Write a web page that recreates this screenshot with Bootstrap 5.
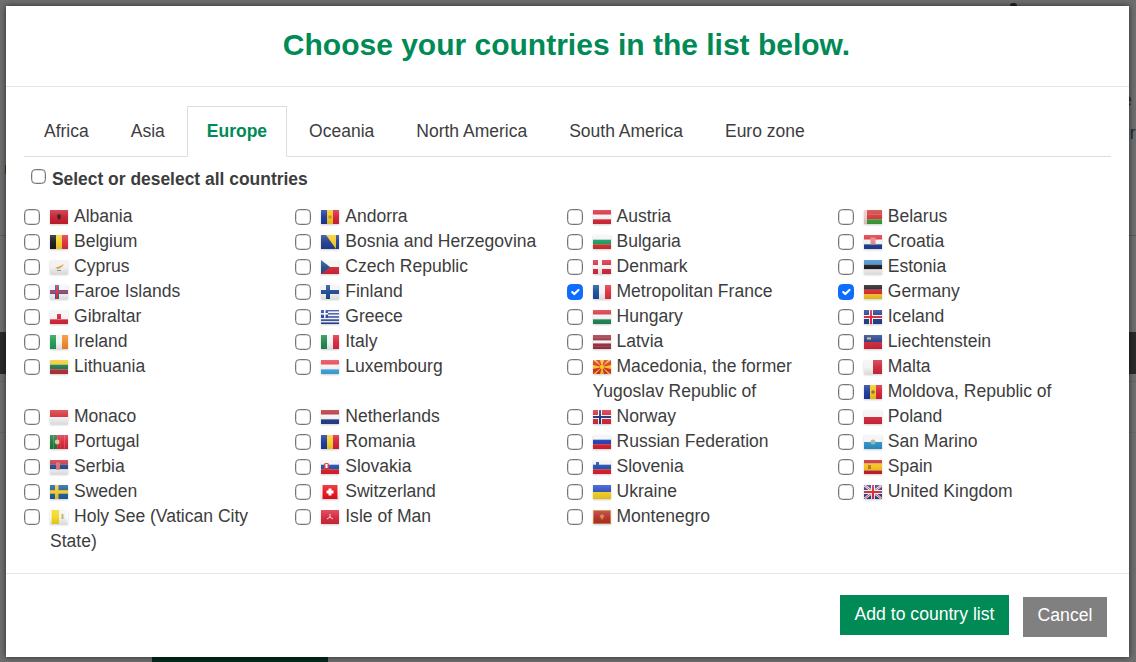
<!DOCTYPE html>
<html lang="en">
<head>
  <meta charset="UTF-8">
  <title>Choose your countries</title>
  <link href="https://cdn.jsdelivr.net/npm/bootstrap@5.3.0/dist/css/bootstrap.min.css" rel="stylesheet">
  <style>
    html, body { height: 100%; overflow: hidden; }
    body { background: #6e6e6e; font-family: "Liberation Sans", Arial, sans-serif; color: #3d3d3d; font-size: 17.55px; }
    /* dimmed page behind the dialog */
    .page-band { position: absolute; left: 0; right: 0; top: 332px; height: 42px; background: #2a2a2a; }
    .page-line { position: absolute; left: 0; right: 0; height: 1px; background: #5a5a5a; }
    .line-a { top: 235px; }
    .line-b { top: 381px; background: #636363; }
    .line-c { top: 432px; background: #666; }
    .page-btn { position: absolute; left: 152px; width: 176px; top: 657px; height: 5px; background: #042b1c; }
    .page-word { position: absolute; color: #1c2a33; font-size: 17.6px; line-height: 20px; }
    .word-a { left: 1122px; top: 90px; }
    .word-b { left: 1120px; top: 123px; }
    .page-mark { position: absolute; left: 1010px; top: 3px; width: 7px; height: 4px; background: #222; border-radius: 3px 3px 0 0; }
    .page-tick { position: absolute; left: 5px; top: 165px; width: 2px; height: 9px; background: #4a3a14; }
    .country-dialog { position: absolute; left: 6px; top: 6px; width: 1123px; height: 651px; background: #fff; box-shadow: 0 0 6px rgba(0,0,0,.6); display: flex; flex-direction: column; }
    .dialog-head { height: 81px; border-bottom: 1px solid #e5e5e5; padding: 0 2px 2px 0; }
    .dialog-head h4 { color: #008a55; font-size: 30px; font-weight: 700; margin: 0; }
    .dialog-main { flex: 1; padding: 19px 18px 0; }
    .dialog-main .nav-tabs { border-bottom: 1px solid #ddd; height: 51px; }
    .dialog-main .nav-link { color: #3d3d3d; font-size: 17.5px; border-radius: 0; padding: 12px 19px 0; margin-right: 2px; height: 51px; line-height: 24px; border: 1px solid transparent; background: transparent; }
    .dialog-main .nav-link.active { color: #008a55; font-weight: 700; border-color: #ddd #ddd #fff; background: #fff; }
    .all-row { padding: 10px 0 0 7px; height: 47px; }
    .all-row input { width: 15px; height: 15px; margin: 2px 1px 0 0; }
    .all-row label { font-weight: 700; font-size: 17.45px; line-height: 24px; vertical-align: top; }
    #countryList { margin-right: 2px; }
    .country-item { float: left; width: 25%; position: relative; padding: 0 18px 0 26px; line-height: 25px; }
    .country-item input { position: absolute; left: 0; top: 5px; width: 16px; height: 16px; margin: 0; }
    input[type=checkbox] { border: 1px solid #767676; border-radius: 3px; box-shadow: inset 0 0 0 .5px rgba(118,118,118,.5); }
    input[type=checkbox]:checked { background-color: #0d6efd; border-color: #0d6efd; box-shadow: none; }
    .flag-box { display: inline-block; position: relative; width: 18px; height: 14px; margin-right: 6px; vertical-align: -2px; box-shadow: 0 1px 2px rgba(0,0,0,.2); }
    .flag-box svg { display: block; width: 18px; height: 14px; filter: blur(.3px); }
    .flag-box::after { content: ""; position: absolute; inset: 0; background: linear-gradient(to bottom, rgba(255,255,255,.2), rgba(255,255,255,.03) 50%, rgba(0,0,0,.1)); }
    .dialog-foot { height: 84px; border-top: 1px solid #e5e5e5; padding: 21px 22px 0 0; gap: 14px; }
    .btn-add, .btn-add:hover { background: #008a55; color: #fff; border: 0; border-radius: 0; width: 169px; height: 40px; padding: 0 0 1px; font-size: 17.6px; }
    .btn-quit, .btn-quit:hover { background: #808080; color: #fff; border: 0; border-radius: 0; width: 84px; height: 40px; padding: 0 0 3px; font-size: 17.6px; margin-top: 2px; }
  </style>
</head>
<body>
  <div class="page-line line-a"></div>
  <div class="page-band"></div>
  <div class="page-line line-b"></div>
  <div class="page-line line-c"></div>
  <div class="page-btn"></div>
  <div class="page-mark"></div>
  <div class="page-tick"></div>
  <div class="page-word word-a">e</div>
  <div class="page-word word-b">er</div>

  <div class="country-dialog">
    <div class="dialog-head d-flex align-items-center justify-content-center">
      <h4>Choose your countries in the list below.</h4>
    </div>
    <div class="dialog-main">
      <ul class="nav nav-tabs">
        <li class="nav-item"><a class="nav-link" href="#">Africa</a></li>
        <li class="nav-item"><a class="nav-link" href="#">Asia</a></li>
        <li class="nav-item"><a class="nav-link active" href="#">Europe</a></li>
        <li class="nav-item"><a class="nav-link" href="#">Oceania</a></li>
        <li class="nav-item"><a class="nav-link" href="#">North America</a></li>
        <li class="nav-item"><a class="nav-link" href="#">South America</a></li>
        <li class="nav-item"><a class="nav-link" href="#">Euro zone</a></li>
      </ul>
      <div class="all-row">
        <input class="form-check-input" type="checkbox" id="allCountries">
        <label for="allCountries">Select or deselect all countries</label>
      </div>
      <div id="countryList" class="clearfix"></div>
    </div>
    <div class="dialog-foot d-flex justify-content-end align-items-start">
      <button class="btn btn-add" type="button">Add to country list</button>
      <button class="btn btn-quit" type="button">Cancel</button>
    </div>
  </div>

  <script>
    // stripes: h = horizontal bands, v = vertical bands, extra = svg drawn on top
    function h(c) { var s = '', n = c.length; c.forEach(function(x, i) { s += '<rect y="' + (14 * i / n) + '" width="18" height="' + (14 / n + .1) + '" fill="' + x + '"/>'; }); return s; }
    function v(c) { var s = '', n = c.length; c.forEach(function(x, i) { s += '<rect x="' + (18 * i / n) + '" width="' + (18 / n + .1) + '" height="14" fill="' + x + '"/>'; }); return s; }
    function cross(bg, c, c2) {
      return '<rect width="18" height="14" fill="' + bg + '"/><rect x="5" width="4" height="14" fill="' + c + '"/><rect y="5" width="18" height="4" fill="' + c + '"/>' +
        (c2 ? '<rect x="6" width="2" height="14" fill="' + c2 + '"/><rect y="6" width="18" height="2" fill="' + c2 + '"/>' : '');
    }
    var R = '#d9293c', W = '#f4f4f4', K = '#1c1c1c';
    var countries = [
      ['Albania', h(['#c8202f']) + '<path d="M9 4l2 1-.5 3L9 10 7.500 8 7 5z" fill="#222"/>'],
      ['Andorra', v(['#1c3a9c', '#f2c81e', '#d6213a']) + '<circle cx="9" cy="7" r="1.800" fill="#c98a2c"/>'],
      ['Austria', h([R, W, R])],
      ['Belarus', h(['#d23a3a', '#d23a3a', '#3f9e3a']) + '<rect width="3" height="14" fill="#f0c8c8"/>'],
      ['Belgium', v([K, '#f5d32a', '#e0303c'])],
      ['Bosnia and Herzegovina', h(['#24408f']) + '<path d="M5 0h10v14z" fill="#f3cb2c"/>'],
      ['Bulgaria', h([W, '#1f9a66', '#d3322c'])],
      ['Croatia', h(['#e0303c', W, '#21408f']) + '<rect x="6.500" y="2.500" width="5" height="7" fill="#e08a8a"/>'],
      ['Cyprus', h(['#f1f1f1']) + '<path d="M5 8l5-2 4-2-2 3-4 2z" fill="#e0a050"/><path d="M7 10.500h4" stroke="#8aa878"/>'],
      ['Czech Republic', h([W, '#d7283c']) + '<path d="M0 0l9 7-9 7z" fill="#22508f"/>'],
      ['Denmark', cross('#d9293c', W)],
      ['Estonia', h(['#3f8ad0', K, W])],
      ['Faroe Islands', cross(W, '#2a5fb0', '#e0303c')],
      ['Finland', cross(W, '#1f4a94')],
      ['Metropolitan France', v(['#1a4f9c', W, '#e0303c']), 1],
      ['Germany', h([K, '#d6282c', '#f5c81e']), 1],
      ['Gibraltar', h([W, W, '#d9293c']) + '<rect x="7" y="4" width="4" height="5" fill="#d9293c"/>'],
      ['Greece', h(['#25429a', W, '#25429a', W, '#25429a', W, '#25429a', W, '#25429a']) + '<rect width="7" height="7.800" fill="#25429a"/><rect x="3" width="1.500" height="7.800" fill="#fff"/><rect y="3.100" width="7" height="1.500" fill="#fff"/>'],
      ['Hungary', h(['#d7323c', W, '#1f8a56'])],
      ['Iceland', cross('#22418f', W, '#d9293c')],
      ['Ireland', v(['#1f9a56', W, '#f28a2c'])],
      ['Italy', v(['#1f8a4c', W, '#d9293c'])],
      ['Latvia', h(['#9c3040', '#9c3040', W, '#9c3040', '#9c3040'])],
      ['Liechtenstein', h(['#23418f', '#d2283c']) + '<rect x="3" y="2.500" width="4" height="2" fill="#e0c040"/>'],
      ['Lithuania', h(['#f3c92c', '#1f7a4c', '#b8323c'])],
      ['Luxembourg', h(['#e8404c', W, '#3fa8e0'])],
      ['Macedonia, the former Yugoslav Republic of', h(['#d9302c']) + '<path d="M0 0h3l6 7 6-7h3L9 7l9 7h-3L9 7l-6 7H0l9-7zM7 0h4L9 7zM7 14h4L9 7zM0 5l9 2-9 2zM18 5L9 7l9 2z" fill="#f5c81e"/><circle cx="9" cy="7" r="2" fill="#f5c81e"/>'],
      ['Malta', v([W, '#d0283c'])],
      ['Moldova, Republic of', v(['#1c3a9c', '#f2c81e', '#d6213a']) + '<circle cx="9" cy="7" r="1.800" fill="#8a6a2c"/>'],
      ['Monaco', h(['#d7323c', W])],
      ['Netherlands', h(['#b8303c', W, '#23408f'])],
      ['Norway', cross('#d9293c', W, '#1f3a7c')],
      ['Poland', h([W, '#d7283c'])],
      ['Portugal', v(['#1f7a3c', '#1f7a3c', '#d9293c', '#d9293c', '#d9293c']) + '<circle cx="7.200" cy="7" r="2.400" fill="#e8c0a0"/>'],
      ['Romania', v(['#1c3a9c', '#f5d02a', '#d6213a'])],
      ['Russian Federation', h([W, '#1f3fb0', '#e0202c'])],
      ['San Marino', h([W, '#2f94cc']) + '<circle cx="9" cy="7" r="2.500" fill="#9cb8a0"/>'],
      ['Serbia', h(['#c8303c', '#26478f', W]) + '<rect x="6" y="2.500" width="4" height="7" fill="#d07070"/>'],
      ['Slovakia', h([W, '#1f4fb0', '#e0202c']) + '<rect x="3" y="3" width="5" height="7" rx="1.500" fill="#e0303c"/><rect x="4.500" y="4" width="2" height="4" fill="#fff"/>'],
      ['Slovenia', h([W, '#1f4fb0', '#e0202c']) + '<rect x="3" y="2" width="3" height="3.500" fill="#1f4fb0"/>'],
      ['Spain', h(['#c8202c', '#f3c01e', '#f3c01e', '#c8202c']) + '<rect x="4" y="5" width="3" height="4" fill="#c07030"/>'],
      ['Sweden', '<rect width="18" height="14" fill="#1f5f9c"/><rect x="5" width="3.500" height="14" fill="#f3c92c"/><rect y="5.200" width="18" height="3.500" fill="#f3c92c"/>'],
      ['Switzerland', '<rect x="1.500" width="15" height="14" fill="#e8141c"/><rect x="7.500" y="3.500" width="3" height="7" fill="#fff"/><rect x="5.500" y="5.500" width="7" height="3" fill="#fff"/>'],
      ['Ukraine', h(['#2a50c0', '#f5cf1e'])],
      ['United Kingdom', h(['#2a3f8f']) + '<path d="M0 0l18 14M18 0L0 14" stroke="#eee" stroke-width="2.500"/><path d="M0 0l18 14M18 0L0 14" stroke="#d9293c" stroke-width=".8"/><rect x="7" width="4" height="14" fill="#eee"/><rect y="5" width="18" height="4" fill="#eee"/><rect x="8" width="2" height="14" fill="#d9293c"/><rect y="6" width="18" height="2" fill="#d9293c"/>'],
      ['Holy See (Vatican City State)', '<rect x="1.500" width="7.500" height="14" fill="#f5d81e"/><rect x="9" width="7.500" height="14" fill="#f4f4f4"/><rect x="11.500" y="4" width="2" height="5" fill="#c8b060"/>'],
      ['Isle of Man', h(['#d8283c']) + '<path d="M9 4v3l-3 2M9 7l3 2" stroke="#f0e0e0" fill="none"/>'],
      ['Montenegro', h(['#b8302c']) + '<rect x="0" y="0" width="18" height="14" fill="none" stroke="#d0a040" stroke-width="1.500"/><path d="M9 4l2.500 2L9 10 6.500 6z" fill="#c89030"/>']
    ];

    var html = '';
    countries.forEach(function(c, i) {
      html += '<div class="country-item"><input class="form-check-input" type="checkbox" id="cc' + i + '"' + (c[2] ? ' checked' : '') + '>' +
        '<label for="cc' + i + '"><span class="flag-box"><svg viewBox="0 0 18 14">' + c[1] + '</svg></span>' + c[0] + '</label></div>';
    });
    document.getElementById('countryList').innerHTML = html;
  </script>
  <script src="https://cdn.jsdelivr.net/npm/bootstrap@5.3.0/dist/js/bootstrap.bundle.min.js"></script>
</body>
</html>
